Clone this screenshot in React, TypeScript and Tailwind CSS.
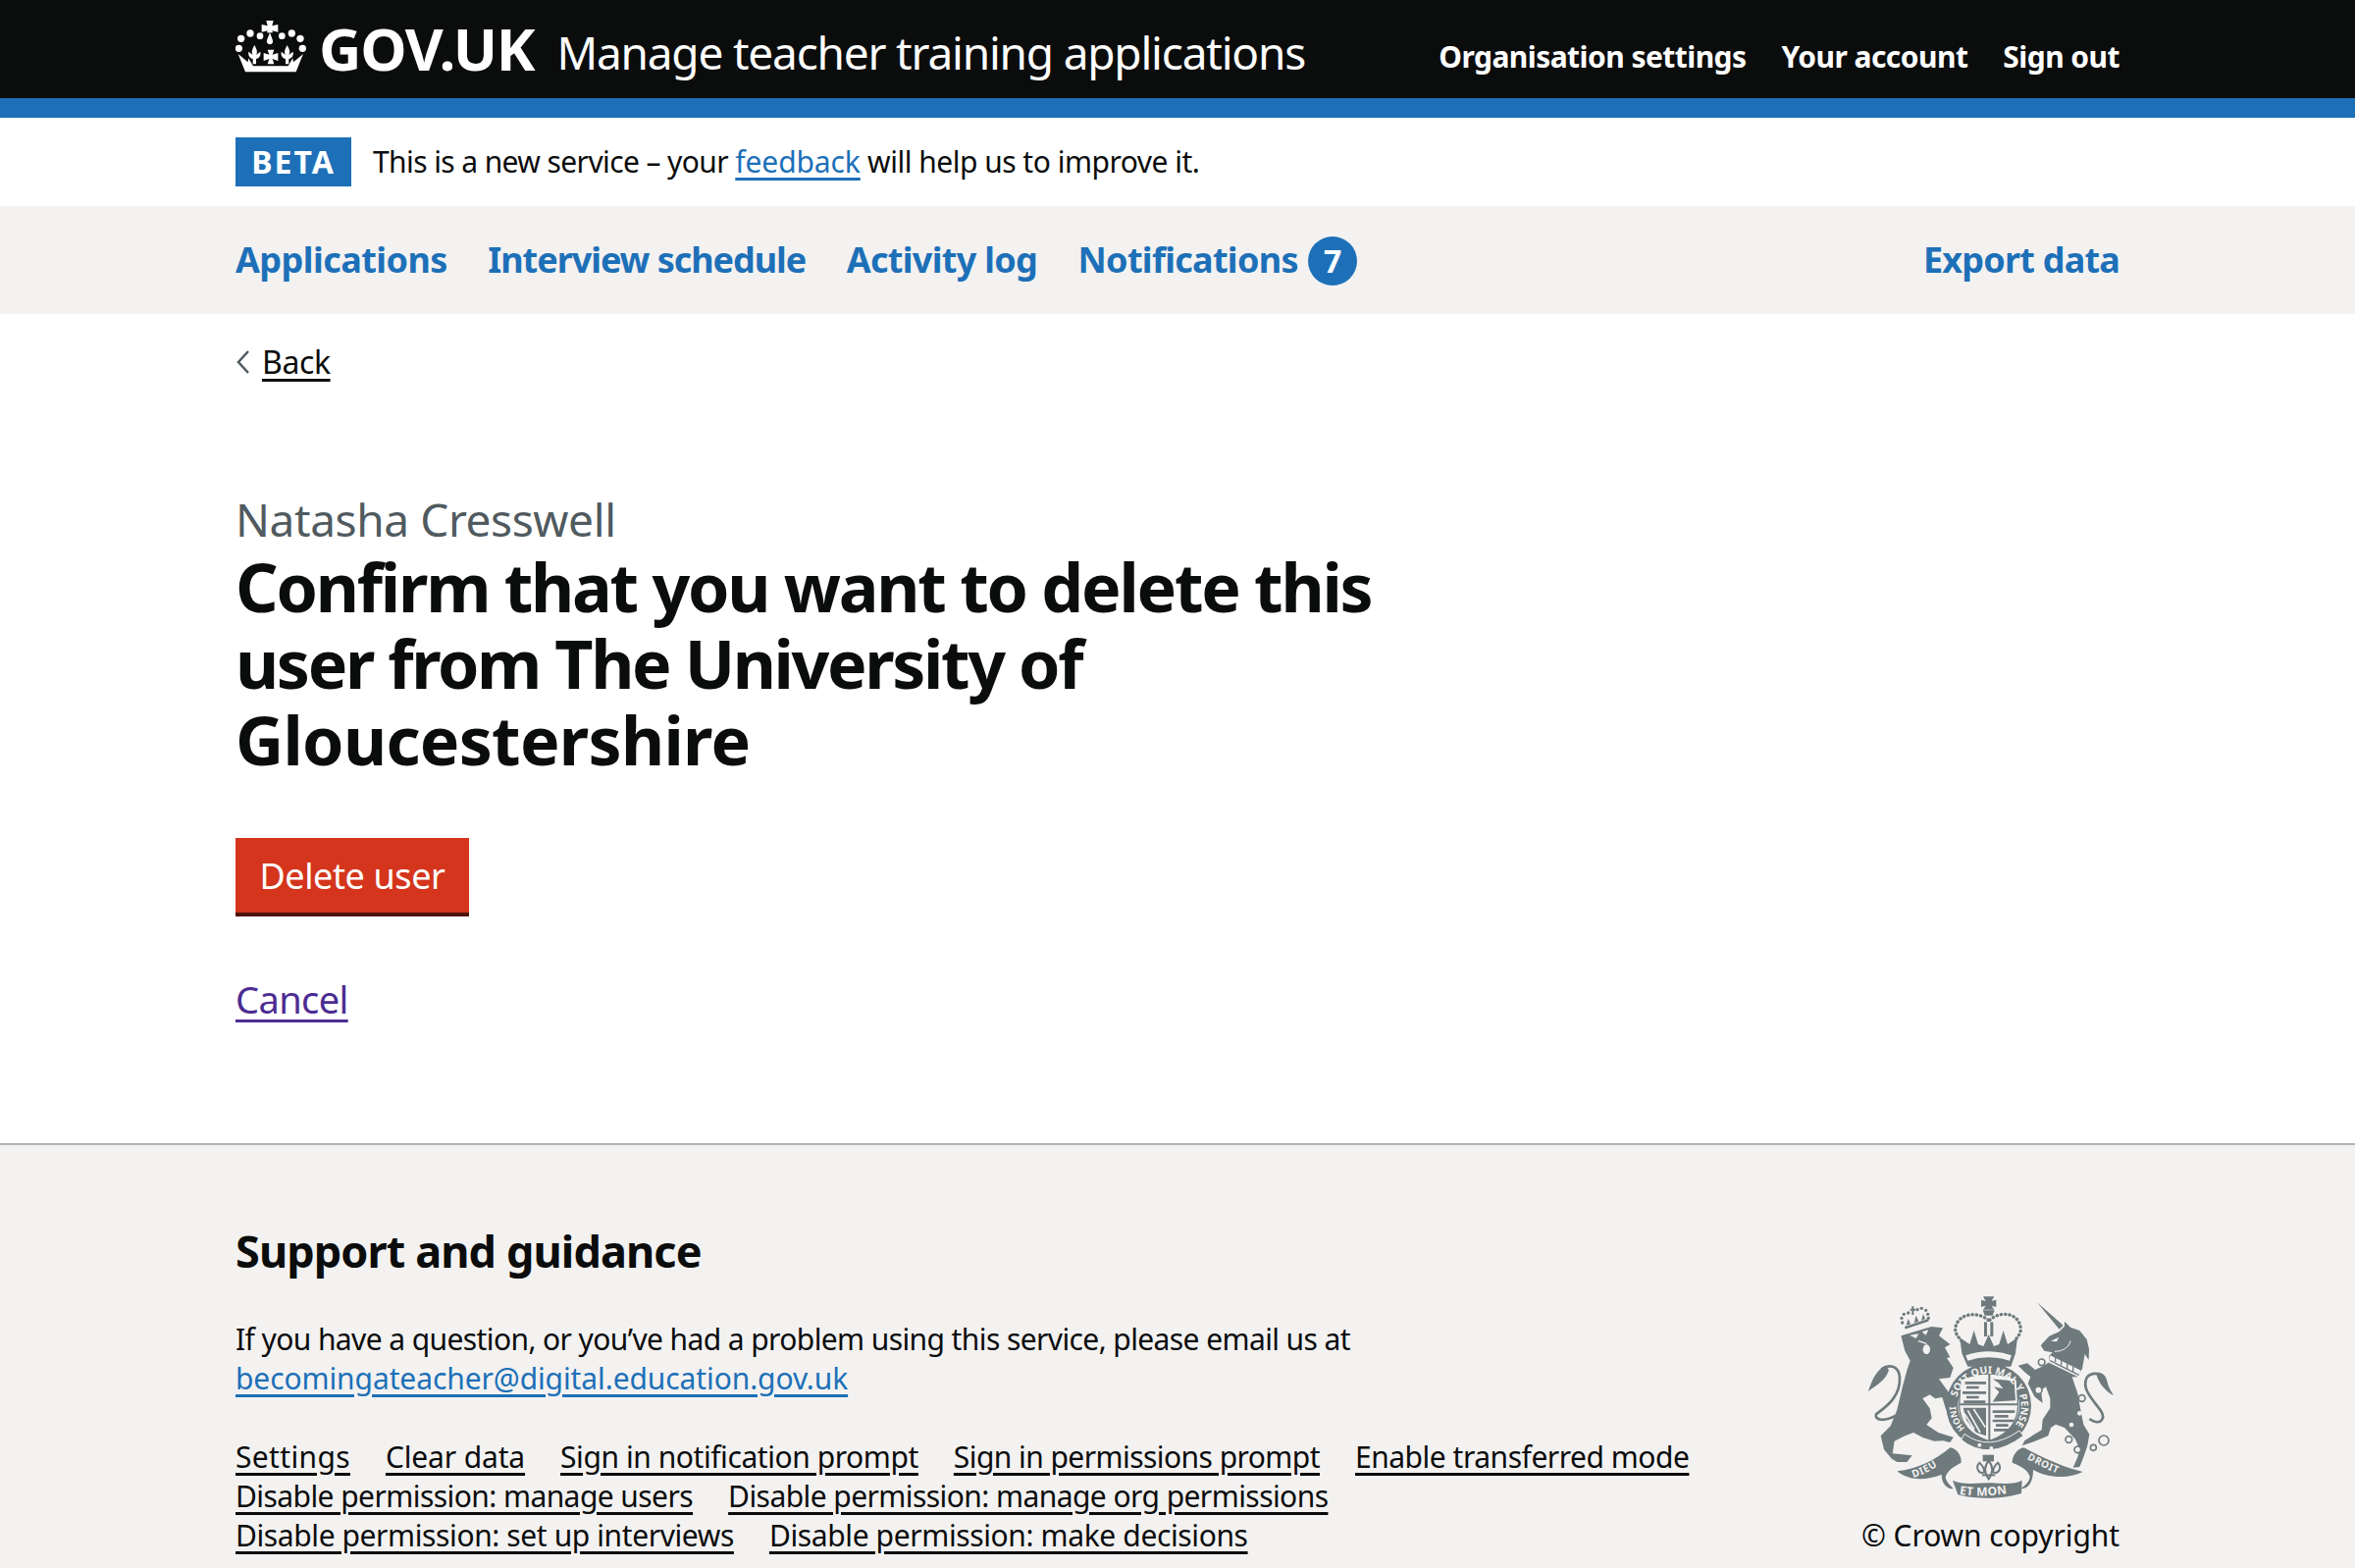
const font = "[font-family:'Noto_Sans',sans-serif]"

function Fleur({ dx = 0 }: { dx?: number }) {
  return <path d="M88 108 C96 122 98 130 93 138 L106 128 C108 140 102 148 93 150 L93 166 H83 L83 150 C74 148 68 140 70 128 L83 138 C78 130 80 122 88 108z" transform={`translate(${dx} 0)`} />
}

function CrownLogo() {
  const dots = [[75, 72, 11], [105, 80, 10], [47, 88, 11], [172, 80, 10], [202, 72, 11], [228, 88, 11], [40, 118, 11], [235, 118, 11]]
  return (
    <svg aria-hidden="true" className="mr-[10px] mb-[5px] h-[55px] w-[75px] shrink-0" fill="#fff" viewBox="30 30 225 165">
      {dots.map(([cx, cy, r]) => (
        <circle cx={cx} cy={cy} key={`${cx}-${cy}`} r={r} />
      ))}
      <path d="M124 33 H146 L142 49 L160 45 V68 L142 64 L144 70 H126 L128 64 L110 68 V45 L128 49z" />
      <path d="M135 68 C130 84 124 94 126 100 a10 10 0 0 0 18 0 C146 94 140 84 135 68z" />
      <path d="M128 122 H148 L143 137 L160 132 V156 L143 150 L148 166 H128 L133 150 L116 156 V132 L133 137z" />
      <Fleur />
      <Fleur dx={100} />
      <path d="M38 135 L68 160 L70 148 L84 172 H191 L205 148 L207 160 L237 135 L215 190 H60z" />
    </svg>
  )
}

function Lion({ grey, bg }: { grey: string; bg: string }) {
  const crownDots = [[116, 84], [114, 70], [121, 58], [134, 54], [162, 44], [175, 40], [188, 46], [194, 58], [196, 70]]
  return (
    <g>
      <path fill={grey} d="M112 124 L205 96 L240 100 L228 124 L262 150 L246 160 L262 190 L252 192 L272 222 L262 252 L228 256 L260 300 L282 342 L272 366 L250 352 L238 312 L216 316 L200 304 L178 316 L200 346 L206 376 L190 396 L226 420 L272 434 L262 450 L240 445 L214 446 L180 436 L150 420 L124 430 L92 446 L86 484 L146 490 L130 510 L100 510 L84 500 L60 472 L50 430 L80 400 L100 350 L116 282 L130 230 L140 200 L124 170z" />
      <path d="M96 368 C60 388 30 382 36 364 C62 344 112 312 108 250 C104 214 74 210 52 226" fill="none" stroke={grey} strokeWidth="8" />
      <path fill={grey} d="M12 294 C22 262 36 232 58 220 C70 218 76 224 74 232 C62 262 42 272 12 294z" />
      <path d="M138 122 L166 118 L158 132z M176 112 L196 106 L188 122z" fill={bg} />
      <ellipse cx="190" cy="166" fill={bg} rx="11" ry="15" />
      <path d="M165 140 L190 148" stroke={bg} strokeWidth="4" />
      <path d="M124 100 L196 76" stroke={grey} strokeWidth="8" />
      <path fill={grey} d="M128 92 L134 72 L141 88z M152 84 L158 62 L166 80z M174 78 L180 58 L186 72z" />
      <path d="M148 34 V60 M140 44 H156" stroke={grey} strokeWidth="6" />
      {crownDots.map(([cx, cy]) => (
        <circle cx={cx} cy={cy} fill={grey} key={`${cx}-${cy}`} r="5" />
      ))}
    </g>
  )
}

function Unicorn({ grey, bg }: { grey: string; bg: string }) {
  const chain = [[235, 441, 10], [262, 472, 10], [310, 466, 9], [342, 444, 15], [152, 205, 10], [142, 290, 11], [275, 315, 10]]
  return (
    <g transform="translate(390 0)">
      <path fill={grey} d="M138 22 L218 92 L206 104z" />
      <path fill={grey} d="M152 150 L175 125 L205 112 L222 95 L222 80 L240 98 L268 108 L290 135 L297 165 L296 198 L284 180 L276 225 L262 250 L245 250 L262 300 L270 345 L280 395 L298 425 L292 460 L280 495 L268 525 L248 527 L262 495 L268 470 L255 440 L222 405 L195 395 L180 405 L172 430 L128 448 L92 460 L100 445 L125 428 L152 412 L155 380 L178 345 L178 315 L165 280 L150 290 L155 330 L130 310 L110 270 L118 250 L100 235 L80 215 L108 208 L132 228 L150 220 L175 205 L175 185 L185 175 L160 170 L150 155z" />
      <path d="M178 184 L272 230 L264 250 L174 206z" fill={bg} />
      <path d="M178 200 L266 244 M194 190 V204 M212 198 V214 M230 208 V224 M248 218 V234" stroke={grey} strokeWidth="4" />
      <path d="M240 140 C236 160 215 172 192 172" fill="none" stroke={bg} strokeWidth="3" />
      <path d="M180 140 L205 128 L198 142z" fill={bg} />
      <path d="M298 378 C330 400 350 380 332 352 C302 312 274 284 290 252 C304 234 334 236 342 256" fill="none" stroke={grey} strokeWidth="8" />
      <path fill={grey} d="M372 306 C352 298 326 272 318 238 C334 232 348 244 352 262 C354 276 362 292 372 306z" />
      {chain.map(([cx, cy, r]) => (
        <circle cx={cx} cy={cy} fill={bg} key={cx} r={r} stroke={grey} strokeWidth="5" />
      ))}
      <circle cx="268" cy="361" fill={bg} r="7" />
      <circle cx="243" cy="396" fill={bg} r="7" />
    </g>
  )
}

function RoyalCrest() {
  const grey = '#6f7a7d'
  const bg = '#f3f2f1'
  const crestFont = "'Noto Sans', sans-serif"
  return (
    <svg aria-hidden="true" className="h-[210px] w-[260px]" viewBox="0 0 780 630">
      <defs>
        <path id="garter" d="M283 312 A100 100 0 1 1 425 428" />
        <path id="garterLow" d="M308 407 A100 100 0 0 1 280 338" />
        <path id="dieu" d="M150 558 Q205 540 254 500" />
        <path id="etmon" d="M290 608 Q375 622 464 600" />
        <path id="droit" d="M497 500 Q550 530 622 558" />
      </defs>

      <Lion bg={bg} grey={grey} />
      <Unicorn bg={bg} grey={grey} />

      {/* crown */}
      <g fill={grey}>
        <path d="M363 4 H397 L389 18 L403 14 V36 L389 32 L397 44 H363 L371 32 L357 36 V14 L371 18z" />
        <path d="M362 46 H398 L392 62 H368z" />
        <rect x="366" y="82" width="9" height="44" />
        <rect x="385" y="82" width="9" height="44" />
        <path d="M298 178 L292 130 L322 150 L335 108 L348 150 L364 156 L380 120 L396 156 L412 150 L425 108 L438 150 L468 130 L462 178 L448 218 H316z" />
      </g>
      <path d="M310 184 Q380 160 450 184 L444 200 Q380 180 316 200z" fill={bg} />
      <path d="M379 76 C340 44 280 60 278 104 C278 118 288 128 298 142 M383 76 C420 44 476 56 478 104 C478 118 468 128 458 142" fill="none" stroke={grey} strokeDasharray="1 12" strokeLinecap="round" strokeWidth="10" />

      {/* garter and shield */}
      <circle cx="380" cy="338" r="130" fill={grey} />
      <circle cx="380" cy="338" r="94" fill={bg} />
      <path d="M294 258 Q380 222 466 258 L470 340 Q466 418 380 446 Q294 418 290 340z" fill={bg} stroke={grey} strokeWidth="4" />
      <path d="M382 240 V446 M292 334 H468" stroke={grey} strokeWidth="6" />
      <g fill="none" stroke={grey} strokeWidth="8">
        <path d="M304 268 H372 M312 282 H350 M300 298 H372 M312 312 H350 M304 326 H370" />
        <path d="M392 356 H460 M398 370 H440 M392 384 H458 M402 398 H440 M396 412 H444" />
      </g>
      <path fill={grey} d="M392 256 L458 262 L462 322 L392 326 L412 296 L396 280 L424 286 L410 268z" />
      <path fill={grey} d="M302 344 H372 V430 L342 420 L312 382z" />
      <path d="M316 352 L354 420 M334 348 L370 404 M306 362 L336 410" stroke={bg} strokeWidth="5" />
      <g fill={bg} fontFamily={crestFont} fontWeight="700">
        <text fontSize="31">
          <textPath href="#garter">SOIT QUI MAL Y PENSE</textPath>
        </text>
        <text fontSize="27">
          <textPath href="#garterLow">HONI</textPath>
        </text>
      </g>
      <path d="M306 424 Q380 480 474 414 L486 430 Q380 510 296 442z" fill={grey} stroke={bg} strokeWidth="3" />
      <circle cx="352" cy="458" fill={bg} r="6" />
      <circle cx="388" cy="468" fill={bg} r="6" />

      {/* motto */}
      <g fill={grey}>
        <path d="M100 538 C160 532 215 506 262 466 C282 468 298 490 296 512 C272 524 252 538 248 556 C250 572 262 580 272 592 C250 592 236 574 236 548 C190 566 140 570 100 538z" />
        <path d="M668 540 C620 530 550 500 488 466 C468 468 452 490 452 512 C478 522 502 535 506 556 C504 572 490 582 478 592 C500 592 516 574 516 534 C560 558 620 564 668 540z" />
        <path d="M270 566 C295 580 340 575 380 574 C420 575 460 580 482 566 L480 606 C420 624 340 624 286 610z" />
        <rect x="362" y="488" width="34" height="20" />
      </g>
      <g fill="none" stroke={grey} strokeWidth="6">
        <path d="M380 506 C396 526 392 546 380 562 C368 546 364 526 380 506z" />
        <path d="M366 542 C346 548 340 522 352 512 C360 520 368 530 366 542z" />
        <path d="M394 542 C414 548 420 522 408 512 C400 520 392 530 394 542z" />
        <path d="M360 550 H400" />
      </g>
      <g fill={bg} fontFamily={crestFont} fontWeight="700">
        <text fontSize="31" letterSpacing="2">
          <textPath href="#dieu">DIEU</textPath>
        </text>
        <text fontSize="36" letterSpacing="1">
          <textPath href="#etmon">ET MON</textPath>
        </text>
        <text fontSize="30" letterSpacing="2">
          <textPath href="#droit">DROIT</textPath>
        </text>
      </g>
    </svg>
  )
}

function Wrap({ children, className = '' }: { children: React.ReactNode; className?: string }) {
  return <div className={`mx-[240px] ${className}`}>{children}</div>
}

export default function App() {
  const navItems = [
    ['Applications', 'tracking-[-0.55px]'],
    ['Interview schedule', 'tracking-[-1.05px]'],
    ['Activity log', 'tracking-[-0.7px]'],
  ]
  const footerLinks = [
    [
      ['Settings', 'tracking-[0.35px]'],
      ['Clear data', 'tracking-[-0.15px]'],
      ['Sign in notification prompt', 'tracking-[-0.43px]'],
      ['Sign in permissions prompt', 'tracking-[-0.56px]'],
      ['Enable transferred mode', 'tracking-[-0.48px]'],
    ],
    [
      ['Disable permission: manage users', 'tracking-[-0.57px]'],
      ['Disable permission: manage org permissions', 'tracking-[-0.57px]'],
    ],
    [
      ['Disable permission: set up interviews', 'tracking-[-0.4px]'],
      ['Disable permission: make decisions', 'tracking-[-0.38px]'],
    ],
  ]

  return (
    <div className={`h-[1598px] overflow-hidden bg-white text-[#0b0c0c] ${font}`}>
      <header className="h-[120px] border-b-[20px] border-[#1d70b8] bg-[#0b0c0c] text-white">
        <Wrap className="flex h-full items-center justify-between">
          <div className="flex items-center">
            <CrownLogo />
            <span className="mb-[2px] text-[60px] leading-none font-bold tracking-[-1.3px]">GOV.UK</span>
            <span className="mt-[6px] ml-[23px] text-[46px] leading-none tracking-[-1.2px]">Manage teacher training applications</span>
          </div>
          <nav className="flex gap-[36px] pt-[16px] text-[30px] leading-[40px] font-bold tracking-[-0.55px]">
            <a>Organisation settings</a>
            <a>Your account</a>
            <a>Sign out</a>
          </nav>
        </Wrap>
      </header>

      <Wrap className="flex h-[90px] items-center">
        <strong className="flex h-[50px] w-[118px] items-center justify-center bg-[#1d70b8] text-[32px] font-bold tracking-[2px] text-white">BETA</strong>
        <p className="ml-[22px] text-[30px] leading-[40px] tracking-[-0.5px]">
          <span className="tracking-[-0.6px]">This is a new service – your </span>
          <a className="tracking-[-0.1px] text-[#1d70b8] underline underline-offset-[5px]">feedback</a> will help us to improve it.
        </p>
      </Wrap>

      <nav className="h-[110px] bg-[#f3f2f1]">
        <Wrap className="flex h-full items-center justify-between text-[36px] font-bold tracking-[-0.8px] text-[#1d70b8]">
          <div className="flex items-center gap-[41.5px]">
            {navItems.map(([item, spacing]) => (
              <a className={spacing} key={item}>{item}</a>
            ))}
            <a className="flex items-center gap-[10px] tracking-[-0.7px]">
              Notifications
              <span className="mt-[2px] flex h-[50px] w-[50px] items-center justify-center rounded-full bg-[#1d70b8] text-[32px] text-white">7</span>
            </a>
          </div>
          <a>Export data</a>
        </Wrap>
      </nav>

      <main className="h-[845px]">
        <Wrap>
          <a className="flex items-center pt-[29px] text-[32px] leading-[40px] tracking-[-0.4px]">
            <svg aria-hidden="true" className="mr-[11px] h-[26px] w-[16px]" fill="none" stroke="#505a5f" strokeWidth="2.5" viewBox="0 0 16 26">
              <path d="M13 2 L3 13 L13 24" />
            </svg>
            <span className="underline underline-offset-[5px]">Back</span>
          </a>

          <div className="mt-[115px] text-[46px] leading-[50px] tracking-[-0.4px] text-[#505a5f]">Natasha Cresswell</div>
          <h1 className="mt-[5px] text-[68px] leading-[78px] font-bold">
            <span className="block tracking-[-2.2px]">Confirm that you want to delete this</span>
            <span className="block tracking-[-2.35px]">user from The University of</span>
            <span className="block tracking-[-0.7px]">Gloucestershire</span>
          </h1>

          <button className="mt-[61px] block h-[80px] w-[238px] border-b-[4px] border-[#4f130a] bg-[#d4351c] pt-[2px] text-[36px] tracking-[-0.4px] text-white" type="button">
            Delete user
          </button>

          <a className="mt-[59px] block text-[38px] leading-[50px] tracking-[-0.6px] text-[#4c2c92] underline underline-offset-[6px]">Cancel</a>
        </Wrap>
      </main>

      <footer className="h-[600px] border-t-[2px] border-[#b1b4b6] bg-[#f3f2f1]">
        <Wrap className="flex justify-between pt-[80px]">
          <div>
            <h2 className="text-[45px] leading-[56px] font-bold tracking-[-0.9px]">Support and guidance</h2>
            <p className="mt-[42px] text-[30px] leading-[40px] tracking-[-0.6px]">
              If you have a question, or you’ve had a problem using this service, please email us at
              <br />
              <a className="tracking-[-0.1px] text-[#1d70b8] underline underline-offset-[5px]">becomingateacher@digital.education.gov.uk</a>
            </p>
            <div className="mt-[40px] text-[30px] leading-[40px]">
              {footerLinks.map((row) => (
                <div className="flex gap-[36px]" key={row[0][0]}>
                  {row.map(([link, spacing]) => (
                    <a className={`underline underline-offset-[5px] ${spacing}`} key={link}>{link}</a>
                  ))}
                </div>
              ))}
            </div>
          </div>
          <div className="flex flex-col items-end pt-[73px]">
            <RoyalCrest />
            <div className="mt-[15px] text-[30px] leading-[40px] tracking-[-0.1px]">© Crown copyright</div>
          </div>
        </Wrap>
      </footer>
    </div>
  )
}
